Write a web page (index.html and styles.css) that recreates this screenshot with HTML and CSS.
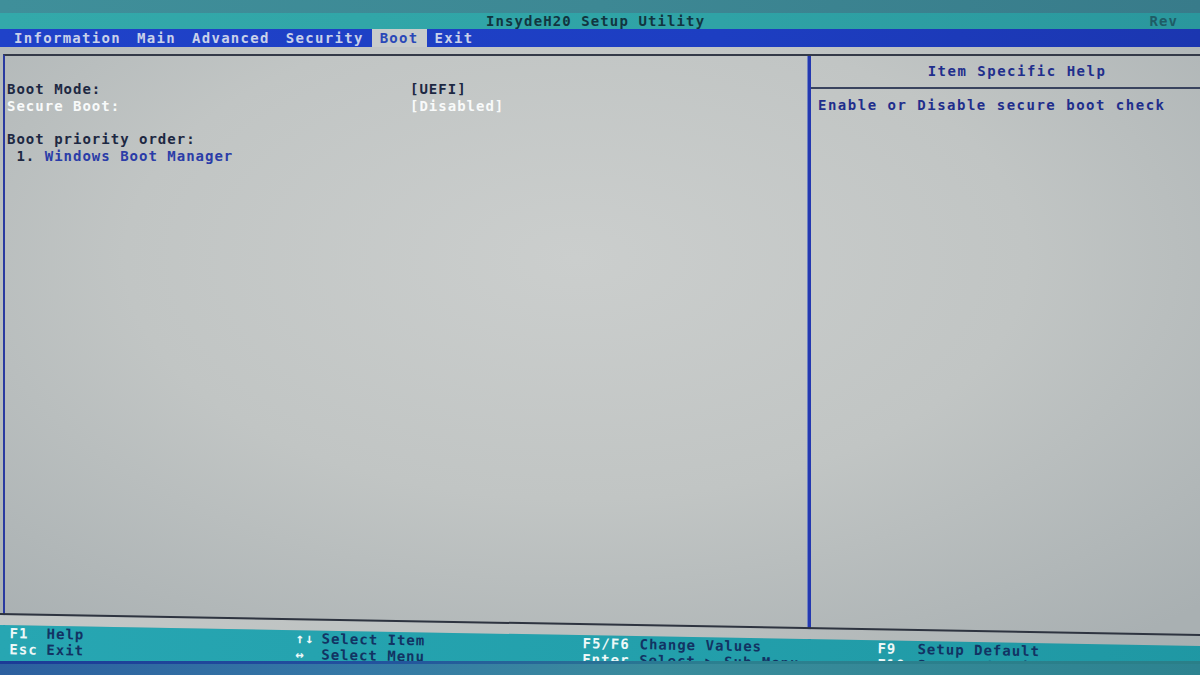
FILE: index.html
```html
<!DOCTYPE html>
<html lang="en">
<head>
<meta charset="utf-8">
<title>InsydeH20 Setup Utility</title>
<link rel="stylesheet" href="styles.css">
</head>
<body>
<div class="topstrip"></div>
<header class="titlebar">
  <span class="title">InsydeH20 Setup Utility</span>
  <span class="rev">Rev</span>
</header>
<nav class="menubar">
  <span class="tab">Information</span>
  <span class="tab">Main</span>
  <span class="tab">Advanced</span>
  <span class="tab">Security</span>
  <span class="tab active">Boot</span>
  <span class="tab">Exit</span>
</nav>
<main class="frame">
  <div class="box">
    <section class="items">
      <div class="row"><span class="label">Boot Mode:</span><span class="value">[UEFI]</span></div>
      <div class="row selected"><span class="label">Secure Boot:</span><span class="value">[Disabled]</span></div>
      <div class="row blank"></div>
      <div class="row"><span class="label">Boot priority order:</span></div>
      <div class="row"><span class="num"> 1. </span><span class="entry">Windows Boot Manager</span></div>
    </section>
    <aside class="help">
      <div class="help-head">Item Specific Help</div>
      <p class="help-text">Enable or Disable secure boot check</p>
    </aside>
  </div>
</main>
<footer class="footer">
  <div class="footer-sep"></div>
  <div class="keys">
    <div class="group g1">
      <span class="key">F1</span><span class="desc">Help</span>
      <span class="key">Esc</span><span class="desc">Exit</span>
    </div>
    <div class="group g2">
      <span class="key">↑↓</span><span class="desc">Select Item</span>
      <span class="key">↔</span><span class="desc">Select Menu</span>
    </div>
    <div class="group g3">
      <span class="key">F5/F6</span><span class="desc">Change Values</span>
      <span class="key">Enter</span><span class="desc">Select ▶ Sub-Menu</span>
    </div>
    <div class="group g4">
      <span class="key">F9</span><span class="desc">Setup Default</span>
      <span class="key">F10</span><span class="desc">Save and Exit</span>
    </div>
  </div>
</footer>
<div class="bezel"></div>
</body>
</html>
```
FILE: styles.css
```css
html, body {
  margin: 0;
  padding: 0;
}

body {
  width: 1200px;
  height: 675px;
  overflow: hidden;
  background: #2c7f8e;
  font-family: "DejaVu Sans Mono", "Liberation Mono", monospace;
  font-weight: bold;
  font-size: 14px;
  letter-spacing: 1px;
}

/* strip above the title bar */
.topstrip {
  height: 13px;
  background: linear-gradient(90deg, #3f8f9a, #3d8894 50%, #387b8a);
}

/* title bar */
.titlebar {
  height: 16px;
  line-height: 16px;
  display: flex;
  white-space: nowrap;
  background: linear-gradient(90deg, #33a9aa, #2fa3a6 60%, #2a979d);
  color: #123540;
  letter-spacing: 1.1px;
}

.title {
  margin-left: 486px;
}

.rev {
  margin-left: auto;
  margin-right: 22px;
  color: #1f5c66;
}

/* menu bar */
.menubar {
  height: 18px;
  line-height: 18px;
  display: flex;
  padding-left: 6px;
  background: linear-gradient(90deg, #1f42c9, #1d3ec2 60%, #1b36b0);
  color: #c9d1ea;
  letter-spacing: 1.3px;
}

.tab {
  padding: 0 8px;
}

.tab.active {
  background: #c8cccb;
  color: #2a48b8;
}

/* main setup area */
.frame {
  height: 603px;
  box-sizing: border-box;
  padding: 7px 0 0 3px;
  display: flex;
  flex-direction: column;
  background: radial-gradient(ellipse 75% 80% at 48% 35%, #cbcecd 0%, #c1c5c4 50%, #a9b0b2 100%);
}

.box {
  flex: 1;
  display: flex;
  border-top: 2px solid #343a48;
  border-left: 2px solid #2a3aa0;
}

.items {
  width: 803px;
  box-sizing: border-box;
  padding: 25px 0 0 2px;
  line-height: 16.7px;
  color: #1d2842;
}

.row {
  display: flex;
  height: 16.7px;
  white-space: nowrap;
}

.label {
  width: 403px;
}

.num {
  white-space: pre;
}

.row.selected {
  color: #f8fafa;
}

.entry {
  color: #2a3ca8;
}

.help {
  flex: 1;
  border-left: 3px solid #2438b0;
  box-shadow: -1px 0 0 #6f82c4;
  color: #1f2e8c;
  letter-spacing: 1.5px;
}

.help-head {
  height: 31px;
  line-height: 31px;
  padding-left: 23px;
  text-align: center;
  border-bottom: 2px solid #39435e;
}

.help-text {
  margin: 0;
  padding: 8px 0 0 7px;
  line-height: 17px;
  white-space: nowrap;
}

/* key legend, slightly tilted with the panel's lower edge */
.footer {
  position: relative;
  margin-top: -37px;
  width: 1240px;
  transform: rotate(1deg);
  transform-origin: 0 0;
}

.footer-sep {
  height: 10px;
  border-top: 2px solid #2e3440;
  background: linear-gradient(90deg, #c4c8c7, #b9bebe 60%, #a6aeb0);
}

.keys {
  height: 44px;
  display: grid;
  grid-template-columns: 286px 287px 295px 1fr;
  align-content: start;
  padding-left: 10px;
  line-height: 16px;
  white-space: nowrap;
  background: linear-gradient(90deg, #27a6b2, #23a0ac 50%, #1f97a3);
}

.group {
  display: grid;
  grid-auto-rows: 16px;
}

.g1 { grid-template-columns: 37px auto; }
.g2 { grid-template-columns: 26px auto; }
.g3 { grid-template-columns: 57px auto; }
.g4 { grid-template-columns: 40px auto; }

.key {
  color: #eef8f8;
}

.desc {
  color: #123363;
}

/* dark band along the bottom edge, over the legend */
.bezel {
  position: relative;
  margin-top: -8px;
  height: 16px;
  border-top: 3px solid;
  border-image: linear-gradient(90deg, #1b3a96, #22509e 30%, #2b8090 60%, #2a7f88) 1;
  background: linear-gradient(90deg, #2c5f9f 0%, #3579a6 30%, #3a8c9c 55%, #2d8390 100%);
}
```
